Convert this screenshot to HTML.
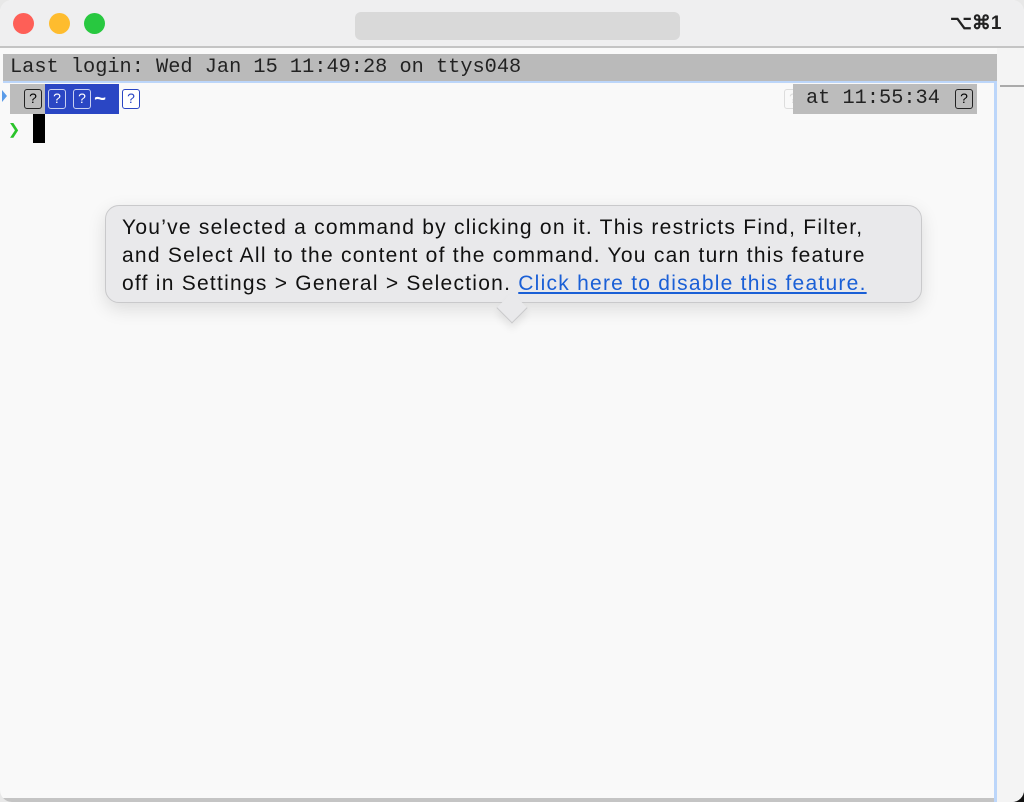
<!DOCTYPE html>
<html><head><meta charset="utf-8"><style>
*{margin:0;padding:0;box-sizing:border-box}
body{width:1024px;height:802px;overflow:hidden;background:#e8e8e8;font-family:"Liberation Sans",sans-serif;position:relative}
.win{position:absolute;left:0;top:0;width:1024px;height:802px;background:#f9f9f9;border-radius:12px;overflow:hidden}
.title{position:absolute;left:0;top:0;width:1024px;height:48px;background:#efeff0;border-bottom:2px solid #c4c4c4}
.dot{position:absolute;top:13px;width:21px;height:21px;border-radius:50%}
.mono{font-family:"Liberation Mono",monospace;font-size:20.3px;color:#222;white-space:pre;position:absolute}
.q{display:inline-block;width:18px;height:20px;border:1.5px solid #222;border-radius:3px;font-size:14px;line-height:17px;text-align:center;font-family:"Liberation Sans",sans-serif}
.tip{position:absolute;left:105px;top:205px;width:817px;height:98px;background:#e9e9eb;border:1px solid #c9c9cb;border-radius:14px;box-shadow:0 6px 18px rgba(0,0,0,0.12);padding:8px 0 0 16px;font-size:21px;letter-spacing:1.25px;line-height:28px;color:#111;white-space:nowrap}
.tip a{color:#1a5fd6;text-decoration:underline}
</style></head><body>
<div style="position:absolute;right:0;bottom:0;width:20px;height:20px;background:#111"></div>
<div class="win">
<div class="title">
<div class="dot" style="left:13px;background:#fe5f57"></div>
<div class="dot" style="left:49px;background:#febc2e"></div>
<div class="dot" style="left:84px;background:#28c840"></div>
<div style="position:absolute;left:355px;top:12px;width:325px;height:28px;background:#d6d6d6;border-radius:6px;opacity:.9"></div>
<div style="position:absolute;left:950px;top:12px;font-size:19px;color:#222;font-weight:bold">⌥⌘1</div>
</div>
<div style="position:absolute;left:3px;top:54px;width:994px;height:27px;background:#bababa"></div>
<div class="mono" style="left:10px;top:56px">Last login: Wed Jan 15 11:49:28 on ttys048</div>
<div style="position:absolute;left:3px;top:81px;width:994px;height:2px;background:#bcd6fa"></div>
<div style="position:absolute;left:994px;top:81px;width:3px;height:721px;background:#bcd6fa"></div>
<div style="position:absolute;left:997px;top:48px;width:27px;height:754px;background:#f4f4f4"></div>
<div style="position:absolute;left:1000px;top:85px;width:24px;height:2px;background:#aaa"></div>
<div style="position:absolute;left:2px;top:90px;width:0;height:0;border-top:6px solid transparent;border-bottom:6px solid transparent;border-left:5px solid #5a9be8"></div>
<div style="position:absolute;left:10px;top:84px;width:35px;height:30px;background:#bcbcbc"></div>
<div style="position:absolute;left:45px;top:84px;width:74px;height:30px;background:#2a46c4"></div>
<span class="q" style="position:absolute;left:24px;top:89px">?</span>
<span class="q" style="position:absolute;left:48px;top:89px;border-color:#c8d0f0;color:#fff">?</span>
<span class="q" style="position:absolute;left:73px;top:89px;border-color:#c8d0f0;color:#fff">?</span>
<div class="mono" style="left:94px;top:89px;color:#fff;font-weight:bold">~</div>
<span class="q" style="position:absolute;left:122px;top:89px;border-color:#2a46c4;color:#2a46c4;background:#fff">?</span>
<span class="q" style="position:absolute;left:784px;top:89px;border-color:#ddd;color:#ddd">?</span>
<div style="position:absolute;left:793px;top:84px;width:184px;height:30px;background:#bcbcbc"></div>
<div class="mono" style="left:806px;top:87px">at 11:55:34</div>
<span class="q" style="position:absolute;left:955px;top:89px">?</span>
<div class="mono" style="left:8px;top:117px;color:#2bc42b;font-weight:bold">❯</div>
<div style="position:absolute;left:33px;top:114px;width:12px;height:29px;background:#000"></div>
<div class="tip">You’ve selected a command by clicking on it. This restricts Find, Filter,<br>and Select All to the content of the command. You can turn this feature<br>off in Settings &gt; General &gt; Selection. <a>Click here to disable this feature.</a></div>
<div style="position:absolute;left:501px;top:297px;width:22px;height:22px;background:#e9e9eb;transform:rotate(45deg);border-right:1px solid #c9c9cb;border-bottom:1px solid #c9c9cb;box-shadow:4px 4px 8px rgba(0,0,0,0.08)"></div>
<div style="position:absolute;left:0;top:798px;width:994px;height:4px;background:#c4c4c4"></div>
</div>
</body></html>
